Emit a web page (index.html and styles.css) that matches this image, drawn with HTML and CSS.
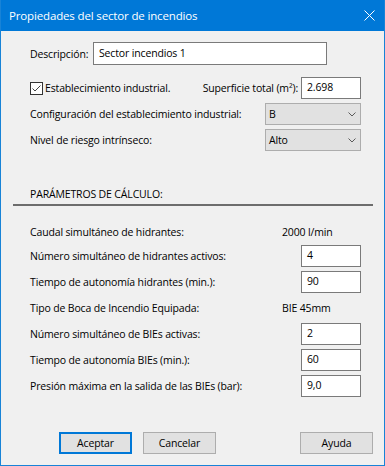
FILE: index.html
```html
<!DOCTYPE html>
<html lang="es">
<head>
<meta charset="utf-8">
<title>Propiedades del sector de incendios</title>
<link rel="stylesheet" href="styles.css">
</head>
<body>
<div class="window">
  <div class="titlebar">
    <span class="title">Propiedades del sector de incendios</span>
    <svg class="close" width="11" height="11" viewBox="0 0 11 11"><path d="M0.5 0.5 L10.5 10.5 M10.5 0.5 L0.5 10.5" stroke="#ffffff" stroke-width="1" fill="none"/></svg>
  </div>
  <div class="content">
    <div class="row desc-row">
      <span class="lbl desc-lbl">Descripción:</span>
      <div class="field desc-field">Sector incendios 1</div>
    </div>
    <div class="row check-row">
      <span class="checkbox"><svg width="13" height="13" viewBox="0 0 13 13"><rect x="0.5" y="0.5" width="12" height="12" fill="#ffffff" stroke="#333333"/><path d="M2.5 6.5 L5 9 L10.5 3.5" stroke="#444444" stroke-width="1" fill="none"/></svg></span>
      <span class="lbl check-lbl">Establecimiento industrial.</span>
      <span class="lbl sup-lbl">Superficie total (m²):</span>
      <div class="field num-field">2.698</div>
    </div>
    <div class="row select-row first-select">
      <span class="lbl">Configuración del establecimiento industrial:</span>
      <div class="select"><span>B</span><svg class="chev" width="8" height="5" viewBox="0 0 8 5"><path d="M0.5 0.5 L4 4 L7.5 0.5" stroke="#5a5a5a" fill="none"/></svg></div>
    </div>
    <div class="row select-row">
      <span class="lbl">Nivel de riesgo intrínseco:</span>
      <div class="select"><span>Alto</span><svg class="chev" width="8" height="5" viewBox="0 0 8 5"><path d="M0.5 0.5 L4 4 L7.5 0.5" stroke="#5a5a5a" fill="none"/></svg></div>
    </div>

    <div class="section-title">PARÁMETROS DE CÁLCULO:</div>
    <div class="separator"></div>

    <div class="row param-row caudal-row">
      <span class="lbl">Caudal simultáneo de hidrantes:</span>
      <span class="value">2000 l/min</span>
    </div>
    <div class="row param-row">
      <span class="lbl">Número simultáneo de hidrantes activos:</span>
      <div class="field num-field">4</div>
    </div>
    <div class="row param-row">
      <span class="lbl">Tiempo de autonomía hidrantes (min.):</span>
      <div class="field num-field">90</div>
    </div>
    <div class="row param-row">
      <span class="lbl">Tipo de Boca de Incendio Equipada:</span>
      <span class="value">BIE 45mm</span>
    </div>
    <div class="row param-row">
      <span class="lbl">Número simultáneo de BIEs activas:</span>
      <div class="field num-field">2</div>
    </div>
    <div class="row param-row">
      <span class="lbl">Tiempo de autonomía BIEs (min.):</span>
      <div class="field num-field">60</div>
    </div>
    <div class="row param-row">
      <span class="lbl">Presión máxima en la salida de las BIEs (bar):</span>
      <div class="field num-field">9,0</div>
    </div>
  </div>
  <div class="footer">
    <div class="button default">Aceptar</div>
    <div class="button">Cancelar</div>
    <div class="spacer"></div>
    <div class="button">Ayuda</div>
  </div>
</div>
</body>
</html>
```

FILE: styles.css
```css
* { box-sizing: border-box; }
html, body { margin: 0; padding: 0; }
body {
  background: #f0f0f0;
  font-family: "Open Sans", "Noto Sans", sans-serif;
  font-size: 10.5px;
  letter-spacing: -0.15px;
  color: #000;
}
.window {
  width: 385px;
  height: 466px;
  border: 1px solid #1883d7;
  border-top: none;
  background: #f0f0f0;
  display: flex;
  flex-direction: column;
}
.titlebar {
  height: 31px;
  flex: none;
  background: #0078d7;
  color: #fff;
  display: flex;
  align-items: center;
  justify-content: space-between;
  padding: 0 9px 1px 8px;
  font-size: 11.5px;
  letter-spacing: -0.15px;
}
.close { display: block; margin-top: 1px; }
.content {
  flex: 1;
  display: flex;
  flex-direction: column;
  padding: 0 23px 0 29px;
}
.row {
  display: flex;
  align-items: center;
  height: 22px;
  flex: none;
}
.lbl { white-space: nowrap; line-height: 16px; }
.desc-row { margin-top: 11px; height: 23px; }
.desc-lbl { width: 63px; flex: none; }
.field {
  background: #fff;
  border: 1px solid #7a7a7a;
  height: 22px;
  padding: 1px 5px 0;
  line-height: 17px;
  white-space: nowrap;
}
.desc-field { width: 234px; height: 23px; padding-top: 2px; }
.check-row { margin-top: 12px; }
.checkbox { width: 13px; height: 13px; flex: none; margin-right: 2px; }
.checkbox svg { display: block; }
.sup-lbl { margin-left: auto; margin-right: 3px; }
.num-field { width: 60px; flex: none; margin-left: auto; }
.sup-lbl + .num-field { margin-left: 0; }
.select-row { margin-top: 4px; }
.select {
  margin-left: auto;
  width: 96px;
  height: 22px;
  background: #e1e1e1;
  border: 1px solid #adadad;
  display: flex;
  align-items: center;
  justify-content: space-between;
  padding: 0 4px 0 3px;
}
.chev { display: block; }
.section-title {
  margin-top: 35px;
  height: 16px;
  line-height: 16px;
  flex: none;
}
.separator {
  margin: 2px -12px 0 -17px;
  height: 2px;
  background: #6d6d6d;
  flex: none;
}
.caudal-row { margin-top: 15px; }
.param-row + .param-row { margin-top: 4px; }
.caudal-row + .param-row { margin-top: 2px; }
.value { width: 79px; flex: none; margin-left: auto; white-space: nowrap; }
.footer {
  flex: none;
  display: flex;
  padding: 0 11px 11px 58px;
  gap: 11px;
}
.spacer { flex: 1; }
.button {
  width: 73px;
  height: 22px;
  background: #e1e1e1;
  border: 1px solid #adadad;
  display: flex;
  align-items: center;
  justify-content: center;
  line-height: 16px;
}
.button.default { border: 2px solid #0078d7; }
```
